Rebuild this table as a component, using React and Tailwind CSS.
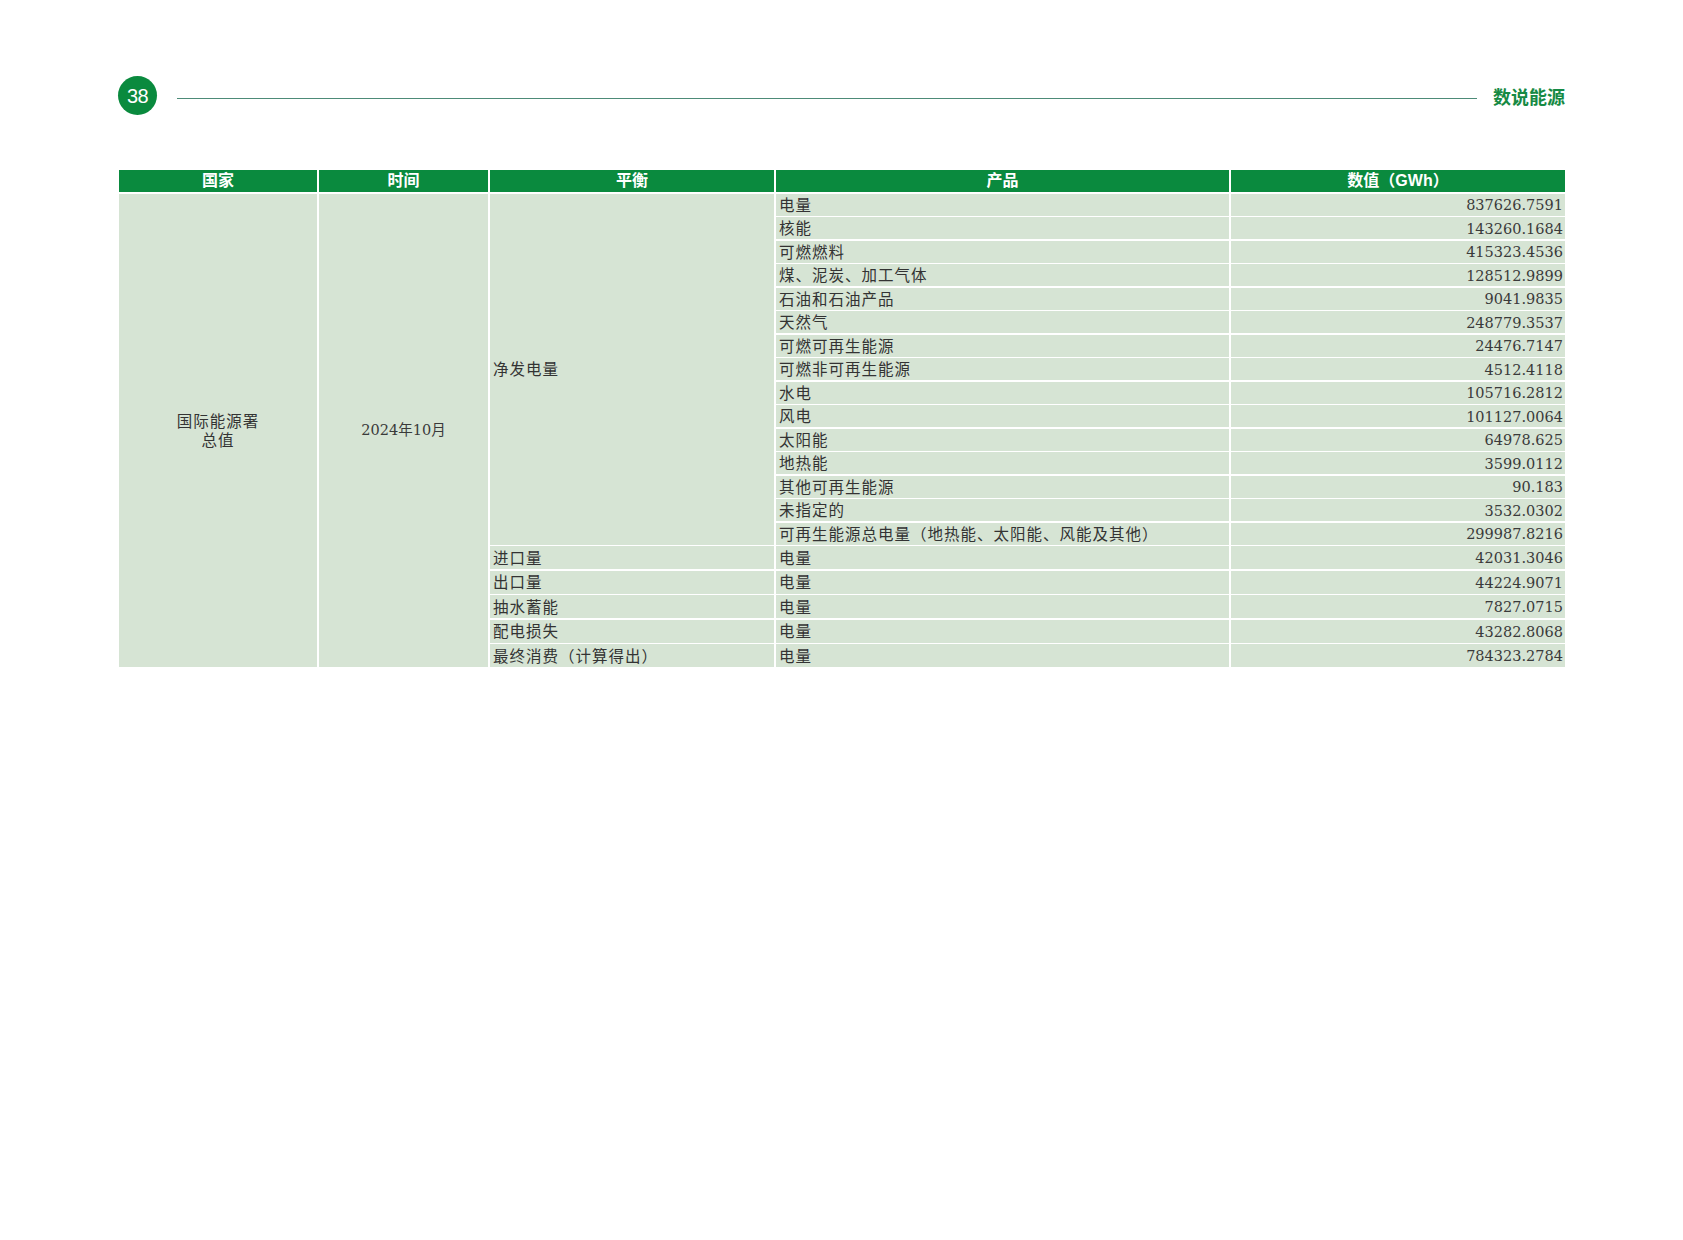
// App.jsx — 数说能源 p.38: IEA net electricity balance table
const HEAD = ['国家', '时间', '平衡', '产品', '数值（GWh）'];

// net generation block (平衡 = 净发电量, merged over these rows)
const NET_ROWS = [
  ['电量', '837626.7591'],
  ['核能', '143260.1684'],
  ['可燃燃料', '415323.4536'],
  ['煤、泥炭、加工气体', '128512.9899'],
  ['石油和石油产品', '9041.9835'],
  ['天然气', '248779.3537'],
  ['可燃可再生能源', '24476.7147'],
  ['可燃非可再生能源', '4512.4118'],
  ['水电', '105716.2812'],
  ['风电', '101127.0064'],
  ['太阳能', '64978.625'],
  ['地热能', '3599.0112'],
  ['其他可再生能源', '90.183'],
  ['未指定的', '3532.0302'],
  ['可再生能源总电量（地热能、太阳能、风能及其他）', '299987.8216'],
];

const OTHER_ROWS = [
  ['进口量', '电量', '42031.3046'],
  ['出口量', '电量', '44224.9071'],
  ['抽水蓄能', '电量', '7827.0715'],
  ['配电损失', '电量', '43282.8068'],
  ['最终消费（计算得出）', '电量', '784323.2784'],
];

const cjk = "font-['Noto_Sans_CJK_SC',sans-serif] text-[15.5px] tracking-[1px] text-[#333]";
const num = "font-['DejaVu_Serif','Noto_Sans_CJK_SC',serif] text-[14.5px] text-[#3a3a3a]";
const cell = 'bg-[#d6e4d4] flex items-center';

export default function App() {
  return (
    <div className="min-h-[1240px] w-[1683px] bg-white">
      {/* running header */}
      <div className="flex items-center ml-[118px] pt-[76px] w-[1447px]">
        <div className="w-[39px] h-[39px] rounded-full bg-[#0a8a3e] flex items-center justify-center text-white text-[20px] font-['Liberation_Sans',sans-serif] tracking-[-0.5px]">
          38
        </div>
        <div className="flex-1 h-px bg-[#4d8b78] ml-[20px] mr-[16px] mt-[5px]" />
        <div className="text-[18px] font-bold text-[#168a44] font-['Noto_Sans_CJK_SC',sans-serif] leading-none">
          数说能源
        </div>
      </div>

      <div
        className="ml-[119px] mt-[55px] w-[1446px] grid gap-x-[2px] gap-y-[1.5px] bg-white"
        style={{
          gridTemplateColumns: '198px 169px 284px 453px 1fr',
          gridTemplateRows: '22px repeat(15, 22px) repeat(5, 23px)',
        }}
      >
        {HEAD.map((h, i) => (
          <div key={h} style={{ gridColumn: i + 1, gridRow: 1 }} className="bg-[#0a8a3e] flex items-center justify-center text-white font-bold text-[16px] font-['Liberation_Sans','Noto_Sans_CJK_SC',sans-serif]">
            {h}
          </div>
        ))}

        <div className={`${cell} col-start-1 row-start-2 row-end-[22] justify-center text-center leading-[19px] ${cjk}`}>
          <div>国际能源署<br />总值</div>
        </div>
        <div className={`${cell} col-start-2 row-start-2 row-end-[22] justify-center pt-[2px] ${num}`}>
          <span>2024年10月</span>
        </div>
        <div className={`${cell} col-start-3 row-start-2 row-end-[17] pl-[3px] ${cjk}`}>净发电量</div>

        {NET_ROWS.map(([label, value], i) => (
          <Row key={label} prod={label} value={value} row={i + 2} />
        ))}

        {OTHER_ROWS.map(([bal, prod, value], i) => (
          <Row key={bal} bal={bal} prod={prod} value={value} row={i + 17} />
        ))}
      </div>
    </div>
  );
}

function Row({ bal, prod, value, row }) {
  return (
    <>
      {bal && (
        <div className={`${cell} pl-[3px] whitespace-nowrap ${cjk}`} style={{ gridColumn: 3, gridRow: row }}>{bal}</div>
      )}
      <div className={`${cell} pl-[3px] whitespace-nowrap ${cjk}`} style={{ gridColumn: 4, gridRow: row }}>{prod}</div>
      <div className={`${cell} justify-end pr-[2px] pt-[3px] ${num}`} style={{ gridColumn: 5, gridRow: row }}>{value}</div>
    </>
  );
}
